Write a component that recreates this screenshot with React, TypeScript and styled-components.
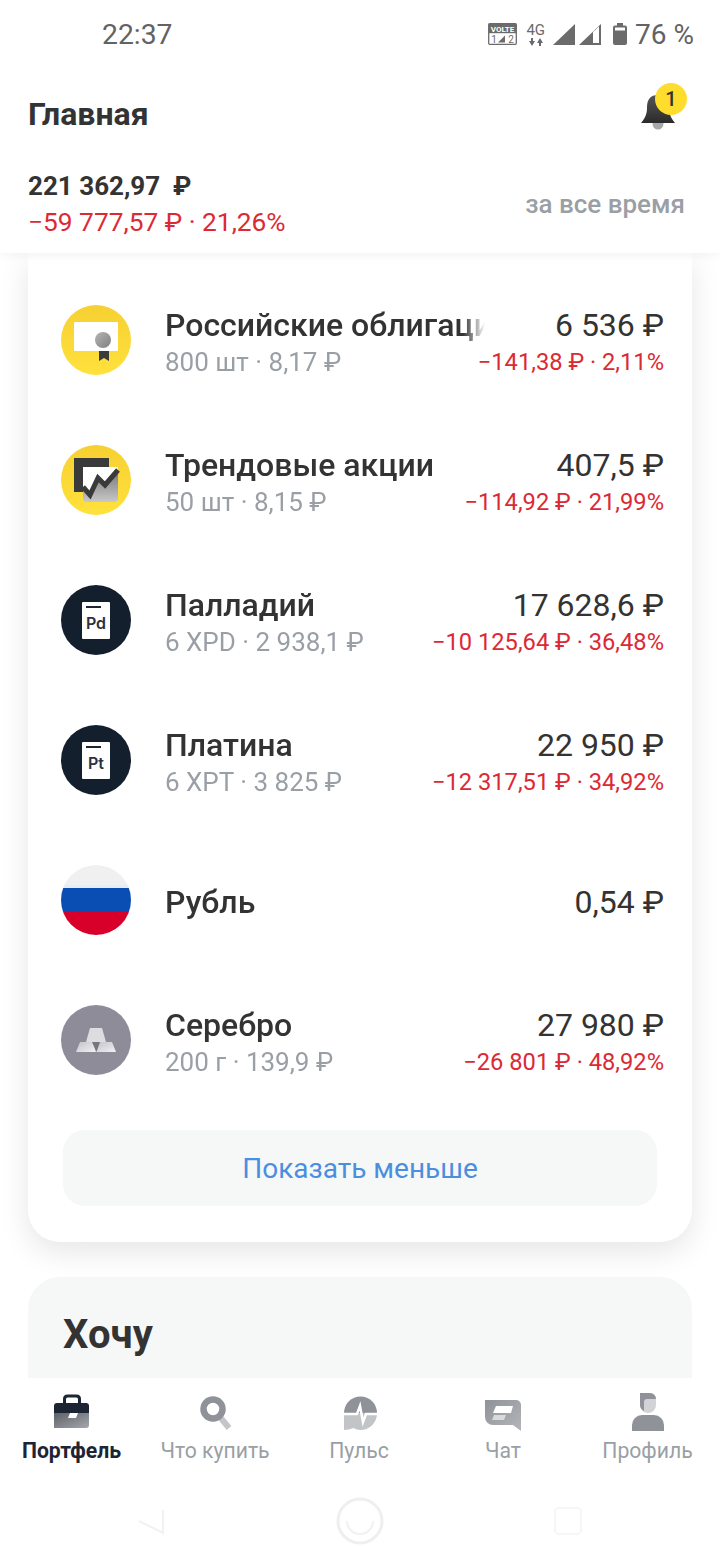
import React from 'react';
import styled, { createGlobalStyle } from 'styled-components';

const GlobalStyle = createGlobalStyle`
  html, body {
    margin: 0;
    padding: 0;
    background: #fff;
  }
  * {
    box-sizing: border-box;
  }
`;

type Asset = {
  name: string;
  sub?: string;
  price: string;
  change?: string;
  icon: React.ReactNode;
};

const BondIcon = () => (
  <svg width="70" height="70" viewBox="0 0 70 70">
    <defs>
      <linearGradient id="bondBg" x1="0" y1="0" x2="0" y2="1">
        <stop offset="0" stopColor="#f6d032" />
        <stop offset="1" stopColor="#ffe13c" />
      </linearGradient>
      <linearGradient id="seal" x1="0" y1="0" x2="1" y2="1">
        <stop offset="0" stopColor="#b5b5b5" />
        <stop offset="1" stopColor="#808080" />
      </linearGradient>
    </defs>
    <circle cx="35" cy="35" r="35" fill="url(#bondBg)" />
    <path d="M38 44h10v12l-5-3-5 3z" fill="#3b3b3b" />
    <rect x="13" y="17" width="44" height="29" rx="1" fill="#fff" />
    <circle cx="42" cy="35" r="8" fill="url(#seal)" />
  </svg>
);

const TrendIcon = () => (
  <svg width="70" height="70" viewBox="0 0 70 70">
    <defs>
      <linearGradient id="trendBg" x1="0" y1="0" x2="0" y2="1">
        <stop offset="0" stopColor="#f6d032" />
        <stop offset="1" stopColor="#ffe13c" />
      </linearGradient>
      <linearGradient id="trendFill" x1="0" y1="0" x2="0" y2="1">
        <stop offset="0" stopColor="#747474" />
        <stop offset="1" stopColor="#c8c8c8" />
      </linearGradient>
    </defs>
    <circle cx="35" cy="35" r="35" fill="url(#trendBg)" />
    <rect x="13" y="13" width="35" height="34" fill="#3a3a3a" />
    <path d="M22 22h35v33a2 2 0 0 1-2 2H24a2 2 0 0 1-2-2z" fill="#fff" />
    <path d="M22 42l7 8 8-17 7 7 13-15v30a2 2 0 0 1-2 2H24a2 2 0 0 1-2-2z" fill="url(#trendFill)" />
    <path d="M22 42l7 8 8-17 7 7 13-15" fill="none" stroke="#3a3a3a" strokeWidth="5" />
  </svg>
);

const MetalIcon = ({ label }: { label: string }) => (
  <MetalCircle>
    <MetalPlate>
      <MetalLabel>{label}</MetalLabel>
    </MetalPlate>
  </MetalCircle>
);

const FlagIcon = () => (
  <svg width="70" height="70" viewBox="0 0 70 70">
    <defs>
      <clipPath id="flagClip">
        <circle cx="35" cy="35" r="35" />
      </clipPath>
    </defs>
    <g clipPath="url(#flagClip)">
      <rect width="70" height="21" fill="#f0f0f0" />
      <rect y="20" width="70" height="3" fill="#e6ecfa" />
      <rect y="23" width="70" height="24" fill="#0a4db3" />
      <rect y="47" width="70" height="23" fill="#d8002a" />
    </g>
  </svg>
);

const SilverIcon = () => (
  <svg width="70" height="70" viewBox="0 0 70 70">
    <defs>
      <linearGradient id="bar" x1="0" y1="0" x2="1" y2="1">
        <stop offset="0" stopColor="#c2c2c9" />
        <stop offset="1" stopColor="#f2f2f4" />
      </linearGradient>
    </defs>
    <circle cx="35" cy="35" r="35" fill="#8d8c98" />
    <path d="M29 23h12l4 14H25z" fill="#dcdce1" />
    <path d="M19 37h13l3 10H15z" fill="url(#bar)" />
    <path d="M37 37h14l4 10H35z" fill="url(#bar)" />
    <path d="M31 37h8l-3.500 10z" fill="#77767f" />
  </svg>
);

const assets: Asset[] = [
  {
    name: 'Российские облигации',
    sub: '800 шт · 8,17 ₽',
    price: '6 536 ₽',
    change: '−141,38 ₽ · 2,11%',
    icon: <BondIcon />,
  },
  {
    name: 'Трендовые акции',
    sub: '50 шт · 8,15 ₽',
    price: '407,5 ₽',
    change: '−114,92 ₽ · 21,99%',
    icon: <TrendIcon />,
  },
  {
    name: 'Палладий',
    sub: '6 XPD · 2 938,1 ₽',
    price: '17 628,6 ₽',
    change: '−10 125,64 ₽ · 36,48%',
    icon: <MetalIcon label="Pd" />,
  },
  {
    name: 'Платина',
    sub: '6 XPT · 3 825 ₽',
    price: '22 950 ₽',
    change: '−12 317,51 ₽ · 34,92%',
    icon: <MetalIcon label="Pt" />,
  },
  {
    name: 'Рубль',
    price: '0,54 ₽',
    icon: <FlagIcon />,
  },
  {
    name: 'Серебро',
    sub: '200 г · 139,9 ₽',
    price: '27 980 ₽',
    change: '−26 801 ₽ · 48,92%',
    icon: <SilverIcon />,
  },
];

const App: React.FC = () => {
  return (
    <Screen>
      <GlobalStyle />
      <TopPanel>
        <StatusBar>
          <Clock>22:37</Clock>
          <StatusIcons>
            <svg width="29" height="22" viewBox="0 0 29 22">
              <rect x="0.7" y="0.7" width="27.6" height="20.6" rx="1" fill="none" stroke="#6b6b6b" strokeWidth="1.300" />
              <rect x="0.7" y="0.7" width="27.6" height="9.5" fill="#6b6b6b" />
              <text x="14.500" y="8.500" textAnchor="middle" fontSize="8" fontWeight="700" fill="#fff" fontFamily="Roboto, sans-serif">VOLTE</text>
              <text x="6" y="19.500" textAnchor="middle" fontSize="10" fill="#6b6b6b" fontFamily="Roboto, sans-serif">1</text>
              <path d="M10 19.500l7-7v7z" fill="#6b6b6b" />
              <text x="23" y="19.500" textAnchor="middle" fontSize="10" fill="#6b6b6b" fontFamily="Roboto, sans-serif">2</text>
            </svg>
            <FourG>
              <span>4G</span>
              <svg width="16" height="8" viewBox="0 0 16 8">
                <path d="M4 8L1 3h2V0h2v3h2zM12 0l3 5h-2v3h-2V5H9z" fill="#6b6b6b" />
              </svg>
            </FourG>
            <svg width="48" height="22" viewBox="0 0 48 22">
              <path d="M0 22L22 1v21z" fill="#6b6b6b" />
              <path d="M26 22L48 1v21z" fill="#6b6b6b" />
              <path d="M40 20V9l6-5.500V20z" fill="#fff" />
            </svg>
            <BatteryIcon width="14" height="22" viewBox="0 0 14 22">
              <path d="M4 0h6v2.500h2a2 2 0 0 1 2 2V20a2 2 0 0 1-2 2H2a2 2 0 0 1-2-2V4.500a2 2 0 0 1 2-2h2z" fill="#6b6b6b" />
              <rect x="2" y="4.500" width="10" height="3" fill="#fff" />
            </BatteryIcon>
            <Battery>76 %</Battery>
          </StatusIcons>
        </StatusBar>
        <TitleRow>
          <Title>Главная</Title>
          <BellWrap>
            <svg width="36" height="40" viewBox="0 0 36 40">
              <defs>
                <linearGradient id="bell" x1="0" y1="0" x2="0" y2="1">
                  <stop offset="0" stopColor="#555" />
                  <stop offset="1" stopColor="#2b2b2b" />
                </linearGradient>
              </defs>
              <circle cx="18" cy="33" r="5.500" fill="#a8a8a8" />
              <path d="M18 4C9 4 7 10 7 17c0 6-2 10-6 15h34c-4-5-6-9-6-15 0-7-2-13-11-13z" fill="url(#bell)" />
            </svg>
            <Badge>1</Badge>
          </BellWrap>
        </TitleRow>
        <TotalRow>
          <div>
            <Total>221 362,97 &nbsp;₽</Total>
            <TotalChange>−59 777,57 ₽ · 21,26%</TotalChange>
          </div>
          <Period>за все время</Period>
        </TotalRow>
      </TopPanel>

      <Content>
        <Card>
          {assets.map((a) => (
            <Row key={a.name}>
              <IconSlot>{a.icon}</IconSlot>
              <NameCol>
                <Name>{a.name}</Name>
                {a.sub && <Sub>{a.sub}</Sub>}
              </NameCol>
              <PriceCol>
                <Price>{a.price}</Price>
                {a.change && <Change>{a.change}</Change>}
              </PriceCol>
            </Row>
          ))}
          <MoreButton>Показать меньше</MoreButton>
        </Card>
        <WantCard>
          <WantTitle>Хочу</WantTitle>
        </WantCard>
      </Content>

      <TabBar>
        <Tab>
          <svg width="36" height="38" viewBox="0 0 36 38">
            <defs>
              <linearGradient id="case" x1="0" y1="0" x2="1" y2="1">
                <stop offset="0" stopColor="#5d6068" />
                <stop offset="1" stopColor="#a5a7ad" />
              </linearGradient>
            </defs>
            <path d="M10.500 10V6q0-3 3-3h9q3 0 3 3v4" fill="none" stroke="#1d2433" strokeWidth="3" />
            <path d="M0 13a3 3 0 0 1 3-3h29a3 3 0 0 1 3 3v7H0z" fill="#1d2433" />
            <path d="M0 20h35v12a3 3 0 0 1-3 3H0z" fill="url(#case)" />
            <path d="M16 20h8l-2 5h-8z" fill="#fff" />
          </svg>
          <TabLabel $active>Портфель</TabLabel>
        </Tab>
        <Tab>
          <svg width="36" height="38" viewBox="0 0 36 38">
            <path d="M23 24l9 11" stroke="#c4c6ca" strokeWidth="6" />
            <circle cx="16" cy="16" r="9.500" fill="none" stroke="#8f9298" strokeWidth="6.500" />
          </svg>
          <TabLabel>Что купить</TabLabel>
        </Tab>
        <Tab>
          <svg width="36" height="38" viewBox="0 0 36 38">
            <path d="M3 20a16.500 16.500 0 0 1 33 0z" fill="#8f9298" />
            <path d="M3 20h33a16.500 16.500 0 0 1-16.500 17c-3 0-5-1-7-2-3 1-6 2-9.500 2z" fill="#c2c4c7" />
            <path d="M3 21h13l3-8 3 16 3-8h11" fill="none" stroke="#fff" strokeWidth="2.500" />
          </svg>
          <TabLabel>Пульс</TabLabel>
        </Tab>
        <Tab>
          <svg width="36" height="38" viewBox="0 0 36 38">
            <defs>
              <linearGradient id="chat" x1="0" y1="0" x2="1" y2="1">
                <stop offset="0" stopColor="#8f9298" />
                <stop offset="1" stopColor="#b4b6ba" />
              </linearGradient>
            </defs>
            <path d="M0 7h31a5 5 0 0 1 5 5v26l-8-6H8a8 8 0 0 1-8-8z" fill="url(#chat)" />
            <path d="M11 13h17l-2 7H8z" fill="#fff" />
            <path d="M9 22h12l-2 5H7z" fill="#d9dadc" />
          </svg>
          <TabLabel>Чат</TabLabel>
        </Tab>
        <Tab>
          <svg width="36" height="38" viewBox="0 0 36 38">
            <path d="M10 0h10a6 6 0 0 1 6 6v6a8 8 0 0 1-16 0z" fill="#d2d3d6" />
            <path d="M10 0h10a6 6 0 0 1 6 6h-9c-2 0-3 1-3 3v9c-2-1-4-3-4-6z" fill="#8f9298" />
            <path d="M2 38v-6a10 10 0 0 1 10-10h12a10 10 0 0 1 10 10v6z" fill="#8f9298" />
          </svg>
          <TabLabel>Профиль</TabLabel>
        </Tab>
      </TabBar>

      <NavBar>
        <svg width="33" height="40" viewBox="0 0 33 40">
          <path d="M4 20l24 12V9" fill="none" stroke="#f1f1f1" strokeWidth="2" />
        </svg>
        <svg width="52" height="52" viewBox="0 0 52 52">
          <circle cx="26" cy="26" r="22" fill="none" stroke="#efefef" strokeWidth="3" />
          <path d="M13 26a13 13 0 0 0 26 0" fill="none" stroke="#f1f1f1" strokeWidth="2" />
        </svg>
        <svg width="32" height="32" viewBox="0 0 32 32">
          <rect x="3" y="3" width="26" height="26" rx="4" fill="#fff" stroke="#f3f3f3" strokeWidth="1.500" />
        </svg>
      </NavBar>
    </Screen>
  );
};

export default App;

const Screen = styled.div`
  width: 720px;
  height: 1560px;
  overflow: hidden;
  display: flex;
  flex-direction: column;
  background: #fff;
  font-family: Roboto, 'Liberation Sans', sans-serif;
`;

const TopPanel = styled.header`
  height: 253px;
  flex: none;
  background: #fff;
  box-shadow: 0 2px 10px rgba(0, 0, 0, 0.05);
  position: relative;
  z-index: 2;
`;

const StatusBar = styled.div`
  height: 68px;
  display: flex;
  align-items: center;
  justify-content: space-between;
  padding: 0 26px 0 102px;
`;

const Clock = styled.span`
  font-size: 28.3px;
  color: #636363;
`;

const StatusIcons = styled.div`
  display: flex;
  align-items: center;
  gap: 8px;
`;

const FourG = styled.div`
  display: flex;
  flex-direction: column;
  align-items: center;
  gap: 1px;
  font-size: 15px;
  line-height: 14px;
  color: #6b6b6b;
  margin-left: 1px;
`;

const BatteryIcon = styled.svg`
  margin-left: 4px;
`;

const Battery = styled.span`
  font-size: 28px;
  color: #636363;
`;

const TitleRow = styled.div`
  height: 92px;
  display: flex;
  align-items: center;
  justify-content: space-between;
  padding: 0 44px 0 28px;
`;

const Title = styled.h1`
  margin: 0;
  font-size: 32px;
  font-weight: 700;
  color: #333;
`;

const BellWrap = styled.div`
  position: relative;
  width: 36px;
  height: 40px;
  margin-bottom: 6px;
`;

const Badge = styled.span`
  position: absolute;
  top: -8px;
  right: -11px;
  width: 32px;
  height: 32px;
  border-radius: 50%;
  background: #ffdd2d;
  color: #333;
  font-size: 20px;
  font-weight: 500;
  display: flex;
  align-items: center;
  justify-content: center;
`;

const TotalRow = styled.div`
  display: flex;
  align-items: center;
  justify-content: space-between;
  padding: 10px 35px 0 28px;
`;

const Total = styled.div`
  font-size: 26px;
  font-weight: 700;
  line-height: 32px;
  margin-bottom: 2px;
  color: #333;
`;

const TotalChange = styled.div`
  font-size: 26.3px;
  line-height: 36px;
  color: #dc2a35;
`;

const Period = styled.span`
  font-size: 26px;
  font-weight: 500;
  color: #9a9fa5;
  margin-bottom: 2px;
`;

const Content = styled.main`
  flex: 1;
  min-height: 0;
  overflow: hidden;
  padding: 0 28px;
  display: flex;
  flex-direction: column;
  gap: 35px;
`;

const Card = styled.section`
  flex: none;
  background: #fff;
  border-radius: 0 0 32px 32px;
  box-shadow: 0 10px 30px rgba(0, 0, 0, 0.1);
  padding: 17px 28px 36px 33px;
  display: flex;
  flex-direction: column;
`;

const Row = styled.div`
  height: 140px;
  display: flex;
  align-items: center;
`;

const IconSlot = styled.div`
  width: 70px;
  height: 70px;
  flex: none;
  display: flex;
`;

const MetalCircle = styled.div`
  width: 70px;
  height: 70px;
  border-radius: 50%;
  background: #141f2e;
  display: flex;
  align-items: center;
  justify-content: center;
`;

const MetalPlate = styled.div`
  width: 28px;
  height: 37px;
  border-radius: 1px;
  background: #fff;
  position: relative;
  display: flex;
  align-items: flex-end;
  justify-content: center;
  padding-bottom: 8px;

  &::before {
    content: '';
    position: absolute;
    top: 4px;
    left: 4px;
    width: 15px;
    height: 2px;
    background: #1d2433;
  }
`;

const MetalLabel = styled.span`
  font-family: Inter, Roboto, sans-serif;
  font-size: 16px;
  font-weight: 600;
  line-height: 16px;
  color: #2a3140;
`;

const NameCol = styled.div`
  flex: none;
  width: 320px;
  margin: 0 -320px 0 34px;
  padding-top: 4px;
  overflow: hidden;
  white-space: nowrap;
  -webkit-mask-image: linear-gradient(to right, #000 298px, transparent 320px);
  mask-image: linear-gradient(to right, #000 298px, transparent 320px);
`;

const Name = styled.div`
  font-size: 32px;
  font-weight: 500;
  line-height: 40px;
  color: #333;
`;

const Sub = styled.div`
  font-size: 26px;
  line-height: 34px;
  color: #9a9fa5;
`;

const PriceCol = styled.div`
  margin-left: auto;
  padding-top: 4px;
  text-align: right;
  white-space: nowrap;
`;

const Price = styled.div`
  font-size: 32px;
  line-height: 40px;
  color: #333;
`;

const Change = styled.div`
  font-size: 23.7px;
  line-height: 34px;
  color: #dc2a35;
`;

const MoreButton = styled.button`
  margin: 20px 7px 0 2px;
  height: 76px;
  border: none;
  border-radius: 22px;
  background: #f6f8f8;
  color: #4b8ee0;
  font-family: inherit;
  font-size: 28px;
`;

const WantCard = styled.section`
  flex: none;
  height: 200px;
  background: #f6f8f8;
  border-radius: 32px 32px 0 0;
  padding: 33px 35px;
`;

const WantTitle = styled.h2`
  margin: 0;
  font-size: 40px;
  font-weight: 700;
  line-height: 50px;
  color: #333;
`;

const TabBar = styled.nav`
  height: 104px;
  flex: none;
  background: #fff;
  display: grid;
  grid-template-columns: 143px 144px 144px 144px 145px;
  position: relative;
  z-index: 2;
`;

const Tab = styled.div`
  display: flex;
  flex-direction: column;
  align-items: center;
  justify-content: flex-start;
  padding-top: 15px;
  gap: 7px;
  height: 100%;
`;

const TabLabel = styled.span<{ $active?: boolean }>`
  font-size: 21.2px;
  line-height: 26px;
  white-space: nowrap;
  font-weight: ${(p) => (p.$active ? 700 : 400)};
  color: ${(p) => (p.$active ? '#1d2433' : '#9a9fa5')};
`;

const NavBar = styled.div`
  height: 78px;
  flex: none;
  background: #fff;
  display: flex;
  align-items: center;
  justify-content: space-between;
  padding: 0 136px 0 135px;
`;
